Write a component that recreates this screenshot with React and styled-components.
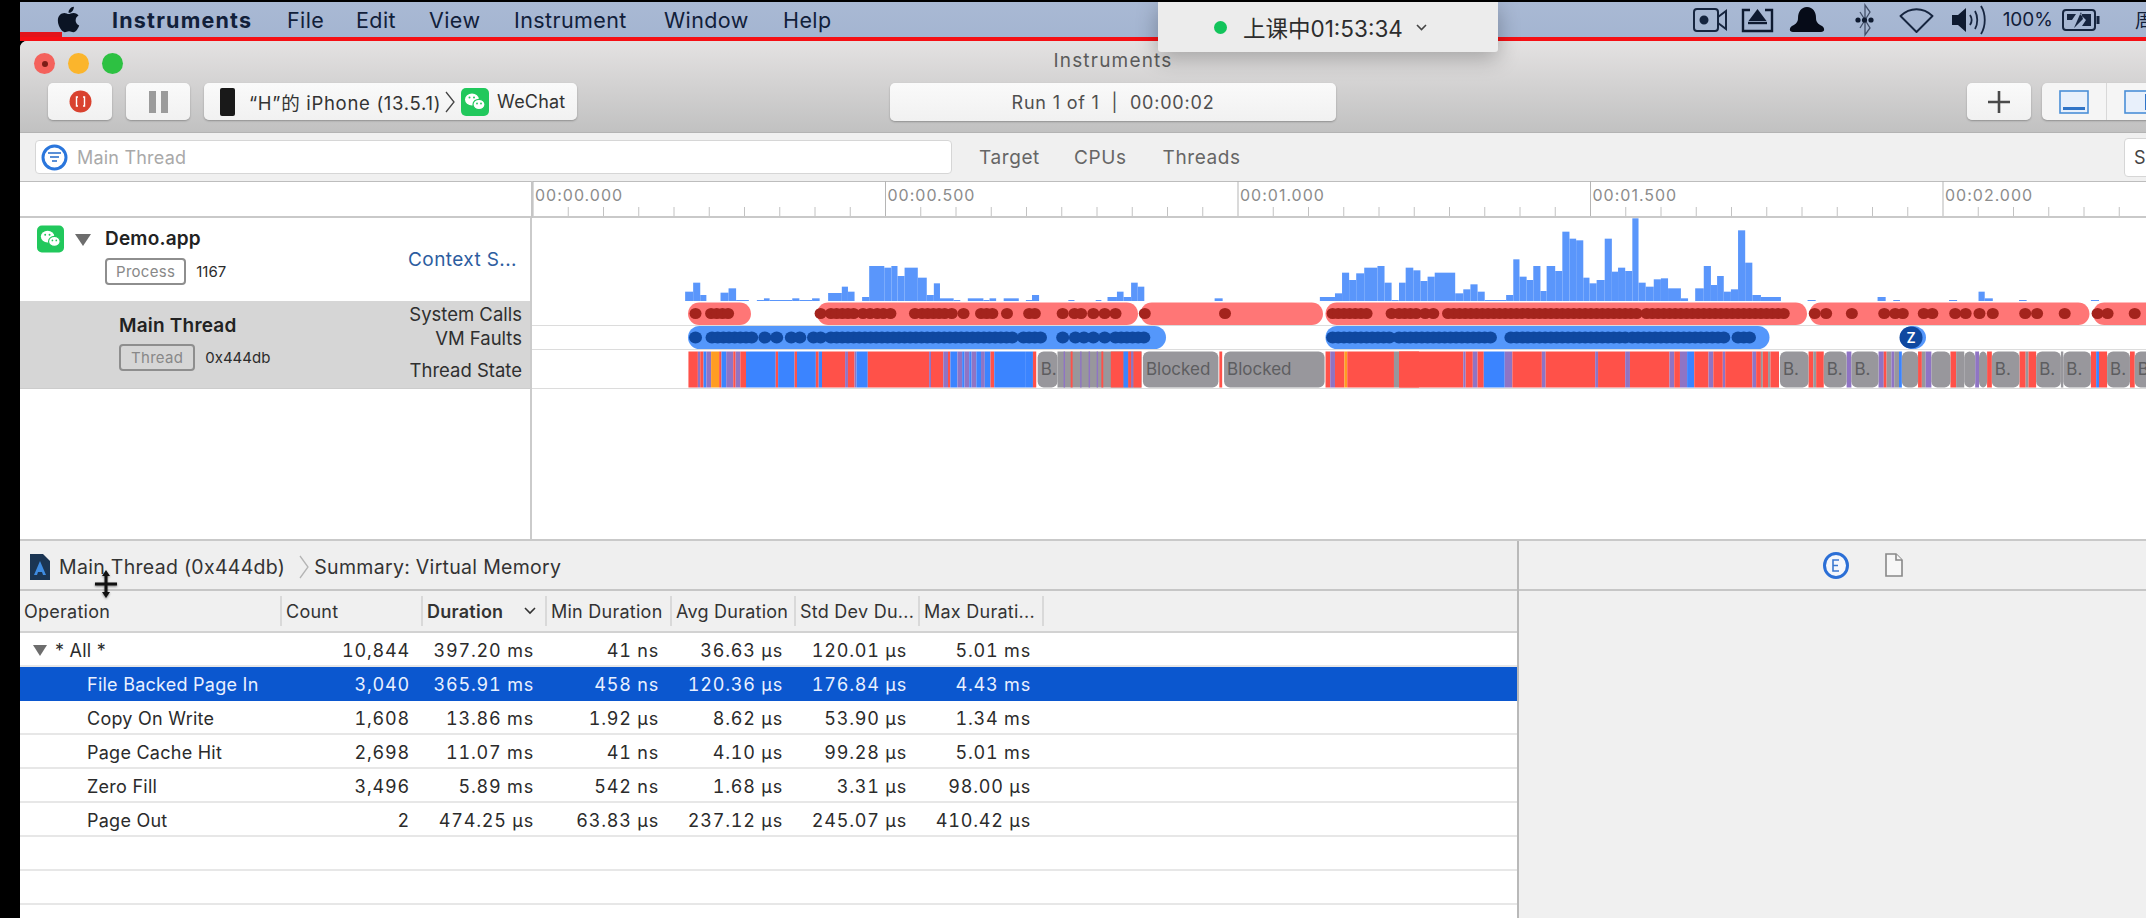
import React from "react";
import styled, { createGlobalStyle } from "styled-components";
import { FaApple } from "react-icons/fa";

const FONT = `Inter, "Noto Sans CJK SC", "Liberation Sans", sans-serif`;

const Global = createGlobalStyle`
  html, body { margin: 0; padding: 0; background: #000; overflow: hidden; }
  body { font-family: ${FONT}; }
`;

const Page = styled.div`
  position: relative;
  width: 2146px;
  height: 918px;
  overflow: hidden;
  background: #000;
  padding: 2px 0 0 20px;
  box-sizing: border-box;
`;
const Column = styled.div`
  display: flex;
  flex-direction: column;
  width: 2186px;
`;
const MenuBar = styled.div`
  position: relative;
  height: 35px;
  display: flex;
  align-items: center;
  padding: 0 52px 0 35px;
  background: linear-gradient(#a9b9d4, #a4b5d1);
  color: #11203a;
  font-size: 21.5px;
  letter-spacing: 0.4px;
  flex: none;
`;
const RedLine = styled.div`
  height: 4px;
  background: #f50f14;
  flex: none;
`;
const Progress = styled.div`
  position: absolute;
  left: 0;
  bottom: 0;
  width: 42px;
  height: 5px;
  background: #e2141a;
`;
const AppleMark = styled(FaApple)`
  position: relative;
  width: 27px;
  height: 29px;
  color: #0b1424;
  margin-right: 30px;
`;
const AppName = styled.span`
  font-weight: 700;
  width: 175px;
  letter-spacing: 1.2px;
`;
const MenuItem = styled.span`
  width: ${(p) => p.$w}px;
`;
const Status = styled.div`
  margin-left: auto;
  display: flex;
  align-items: center;
  font-size: 19px;
  letter-spacing: 0;
`;
const StatusCell = styled.span`
  display: flex;
  margin-left: ${(p) => p.$gap}px;
  white-space: nowrap;
`;

const Notice = styled.div`
  position: absolute;
  left: 1158px;
  top: 2px;
  width: 340px;
  height: 50px;
  background: #ececec;
  display: flex;
  align-items: center;
  padding-left: 56px;
  box-sizing: border-box;
  box-shadow: 0 6px 22px rgba(0, 0, 0, 0.28);
  border-radius: 0 0 3px 3px;
  color: #2d2d2d;
  font-size: 22.5px;
`;
const GreenDot = styled.i`
  width: 13px;
  height: 13px;
  border-radius: 50%;
  background: #12c45b;
  margin-right: 16px;
`;
const NoticeChevron = styled.svg`
  margin-left: 13px;
`;

const Win = styled.div`
  width: 2186px;
  height: 877px;
  background: #fff;
  border-radius: 7px 0 0 0;
  overflow: hidden;
  display: flex;
  flex-direction: column;
`;
const TitleBar = styled.div`
  height: 92px;
  flex: none;
  box-sizing: border-box;
  background: linear-gradient(#e4e2e2, #c1c1c1);
  border-bottom: 1px solid #b3b3b3;
  display: flex;
  flex-direction: column;
`;
const TopStrip = styled.div`
  height: 42px;
  display: grid;
  grid-template-columns: 1fr auto 1fr;
  align-items: center;
  box-sizing: border-box;
`;
const Lights = styled.div`
  display: flex;
  gap: 13px;
  padding: 3px 0 0 14px;
`;
const Light = styled.span`
  width: 21px;
  height: 21px;
  border-radius: 50%;
  background: ${(p) => p.$c};
  display: flex;
  align-items: center;
  justify-content: center;
`;
const LightDot = styled.i`
  width: 6px;
  height: 6px;
  border-radius: 50%;
  background: #7c1d16;
`;
const WinTitle = styled.div`
  font-size: 19px;
  color: #5b5b5b;
  letter-spacing: 1.2px;
  padding-bottom: 3px;
`;
const Controls = styled.div`
  display: grid;
  grid-template-columns: 1fr 446px 1fr;
  height: 38px;
`;
const ControlsLeft = styled.div`
  display: flex;
  gap: 14px;
  padding-left: 28px;
`;
const ControlsRight = styled.div`
  display: flex;
  justify-content: flex-end;
  gap: 11px;
  padding-right: 36px;
`;
const Btn = styled.div`
  width: ${(p) => p.$w || 64}px;
  height: 37px;
  background: linear-gradient(#fafafa, #f1f1f1);
  border-radius: 5px;
  box-shadow: 0 1px 2px rgba(0, 0, 0, 0.28);
  display: flex;
  align-items: center;
  justify-content: center;
  flex: none;
  color: #3a3a3a;
  font-size: 17px;
`;
const DeviceBtn = styled(Btn)`
  justify-content: flex-start;
  padding-left: 16px;
  box-sizing: border-box;
  color: #333;
`;
const DeviceName = styled.span`
  margin-left: 14px;
  white-space: nowrap;
  font-size: 18.5px;
  letter-spacing: 0.7px;
`;
const DeviceChevron = styled.svg`
  margin: 0 5px 0 3px;
  flex: none;
`;
const WeChatName = styled.span`
  margin-left: 8px;
  font-size: 18px;
  letter-spacing: 0.2px;
`;
const RunBtn = styled(Btn)`
  width: 446px;
  height: 38px;
  color: #4f4f4f;
  font-size: 18px;
  letter-spacing: 0.8px;
`;
const PanelGroup = styled.div`
  display: flex;
  height: 37px;
  background: #f5f5f5;
  border-radius: 5px;
  box-shadow: 0 1px 2px rgba(0, 0, 0, 0.28);
`;
const PanelCell = styled.div`
  width: 64px;
  display: flex;
  align-items: center;
  justify-content: center;
  border-left: ${(p) => (p.$first ? "none" : "1px solid #d8d8d8")};
  box-sizing: border-box;
`;

const FilterBar = styled.div`
  height: 48px;
  flex: none;
  box-sizing: border-box;
  background: #f0f0f0;
  display: flex;
  align-items: center;
  padding: 0 36px 0 15px;
`;
const FilterInput = styled.div`
  width: 917px;
  height: 34px;
  box-sizing: border-box;
  background: #fff;
  border: 1px solid #d6d6d6;
  border-radius: 4px;
  display: flex;
  align-items: center;
  padding-left: 5px;
  color: #a9a9a9;
  font-size: 18px;
`;
const FilterText = styled.span`
  margin-left: 9px;
  letter-spacing: 0.2px;
`;
const FilterTab = styled.span`
  margin-left: ${(p) => p.$gap}px;
  color: #666;
  font-size: 19px;
  letter-spacing: 0.6px;
`;
const StrategyBtn = styled.div`
  margin-left: auto;
  width: 46px;
  height: 39px;
  background: #fff;
  border: 1px solid #d6d6d6;
  border-radius: 4px;
  box-sizing: border-box;
  padding-left: 9px;
  display: flex;
  align-items: center;
  color: #444;
  font-size: 18px;
`;

const RulerSvg = styled.svg`
  display: block;
  width: 2186px;
  height: 37px;
  flex: none;
`;
const RulerLabel = styled.text`
  font-family: ${FONT};
  font-size: 16px;
  fill: #8c8c8c;
  letter-spacing: 1px;
`;

const TrackRow = styled.div`
  display: grid;
  grid-template-columns: 512px 1fr;
  height: ${(p) => p.$h}px;
  flex: none;
`;
const TrackHead = styled.div`
  position: relative;
  display: grid;
  background: ${(p) => (p.$dark ? "#d6d6d6" : "#fff")};
  border-right: 2px solid #cbcbcb;
  border-bottom: ${(p) => (p.$dark ? "1px solid #ccc" : "none")};
  box-sizing: border-box;
`;
const ProcessHead = styled(TrackHead)`
  grid-template-columns: 38px 30px 1fr auto;
  padding: 7px 10px 0 17px;
`;
const ThreadHead = styled(TrackHead)`
  grid-template-columns: 1fr auto;
  padding: 0 8px 0 99px;
  align-items: center;
`;
const TriCell = styled.div`
  padding-top: 9px;
`;
const Tri = styled.span`
  display: block;
  width: 0;
  height: 0;
  border-left: ${(p) => p.$s}px solid transparent;
  border-right: ${(p) => p.$s}px solid transparent;
  border-top: ${(p) => p.$s * 1.5}px solid #6d6d6d;
`;
const NameBlock = styled.div`
  display: flex;
  flex-direction: column;
  gap: ${(p) => p.$gap}px;
  padding-top: ${(p) => p.$top || 0}px;
  padding-bottom: ${(p) => p.$bottom || 0}px;
`;
const TrackName = styled.div`
  font-size: 19px;
  font-weight: 600;
  color: #222;
  line-height: 22px;
  letter-spacing: 0.2px;
`;
const IdLine = styled.div`
  display: flex;
  align-items: center;
  gap: 10px;
  font-size: 15px;
  color: #2c2c2c;
`;
const Badge = styled.span`
  border: 2px solid #8e8e8e;
  border-radius: 4px;
  padding: 0 ${(p) => p.$pad}px;
  height: 23px;
  line-height: 23px;
  font-size: 15px;
  color: #888;
  letter-spacing: 0.3px;
`;
const ContextLink = styled.div`
  color: #2d5d9f;
  font-size: 19px;
  letter-spacing: 0.4px;
  padding: 23px 3px 0 0;
`;
const Labels = styled.div`
  display: flex;
  flex-direction: column;
  align-items: flex-end;
  font-size: 18.5px;
  color: #2f2f2f;
  line-height: 24px;
  padding-bottom: 5px;
`;
const LabelGap = styled.span`
  margin-top: ${(p) => p.$m}px;
`;
const GraphSvg = styled.svg`
  display: block;
  width: 1654px;
  height: ${(p) => p.$h}px;
`;
const SegLabel = styled.text`
  font-family: ${FONT};
  font-size: 17px;
  fill: #5d5d60;
`;
const ZLabel = styled.text`
  font-family: ${FONT};
  font-size: 14px;
  font-weight: 600;
  fill: #fff;
`;
const Blank = styled.div`
  height: 150px;
  flex: none;
  display: grid;
  grid-template-columns: 512px 1fr;
`;
const BlankLeft = styled.div`
  border-right: 2px solid #cbcbcb;
`;

const Lower = styled.div`
  flex: 1;
  display: grid;
  grid-template-columns: 1499px 1fr;
  border-top: 2px solid #c9c9c9;
  min-height: 0;
`;
const TablePane = styled.div`
  display: flex;
  flex-direction: column;
  background: #fff;
  border-right: 2px solid #b9b9b9;
  box-sizing: border-box;
  position: relative;
`;
const Crumbs = styled.div`
  height: 50px;
  flex: none;
  box-sizing: border-box;
  background: #efefef;
  border-bottom: 2px solid #c6c6c6;
  display: flex;
  align-items: center;
  padding: 3px 0 0 10px;
  color: #333;
  font-size: 19.5px;
  letter-spacing: 0.3px;
`;
const CrumbText = styled.span`
  margin-left: ${(p) => p.$m}px;
`;
const CrumbChevron = styled.svg`
  margin-left: 13px;
`;
const Grid = styled.div`
  display: grid;
  grid-template-columns: 262px 141px 124px 125px 124px 124px 124px 1fr;
  box-sizing: border-box;
`;
const Head = styled(Grid)`
  height: 42px;
  flex: none;
  background: #f0f0f0;
  border-bottom: 2px solid #d2d2d2;
  align-items: center;
`;
const HeadCell = styled.div`
  height: 30px;
  display: flex;
  align-items: center;
  justify-content: space-between;
  box-sizing: border-box;
  padding: 0 4px;
  border-right: ${(p) => (p.$last ? "none" : "2px solid #d9d9d9")};
  font-size: 18px;
  letter-spacing: 0.25px;
  font-weight: ${(p) => (p.$bold ? 600 : 400)};
  color: #333;
  white-space: nowrap;
  overflow: hidden;
`;
const SortChevron = styled.svg`
  margin-right: 5px;
`;
const Row = styled(Grid)`
  height: 34px;
  flex: none;
  align-items: center;
  padding-top: 2px;
  background: ${(p) => (p.$sel ? "#0b57cf" : "#fff")};
  color: ${(p) => (p.$sel ? "#e9f0ff" : "#2b2b2b")};
  border-bottom: 2px solid ${(p) => (p.$sel ? "#0b57cf" : "#e7e7e7")};
  font-size: 18px;
`;
const NameCell = styled.div`
  display: flex;
  align-items: center;
  padding-left: ${(p) => (p.$tree ? 13 : 67)}px;
  gap: 8px;
  letter-spacing: 0.25px;
`;
const Num = styled.div`
  text-align: right;
  padding-right: 13px;
  font-variant-numeric: tabular-nums;
  letter-spacing: 0.8px;
`;
const RightPane = styled.div`
  background: #f0f0f0;
  display: flex;
  flex-direction: column;
`;
const InspectorBar = styled.div`
  height: 50px;
  box-sizing: border-box;
  border-bottom: 2px solid #c6c6c6;
  display: flex;
  align-items: center;
  gap: 36px;
  padding-left: 304px;
  flex: none;
`;
const Cursor = styled.svg`
  position: absolute;
  left: 74px;
  top: 29px;
  filter: drop-shadow(0 1px 1px rgba(0, 0, 0, 0.45));
`;

const WeChat = ({ w = 28, h = 28 }) => (
  <svg width={w} height={h} viewBox="0 0 28 28">
    <rect width="28" height="28" rx="5" fill="#21c85c" />
    <ellipse cx="11" cy="11.5" rx="7" ry="6" fill="#fff" />
    <ellipse cx="18" cy="16.5" rx="6" ry="5.2" fill="#fff" stroke="#21c85c" strokeWidth="1.2" />
    <circle cx="8.5" cy="9.500" r="1" fill="#21c85c" />
    <circle cx="13" cy="9.500" r="1" fill="#21c85c" />
    <circle cx="16" cy="15.500" r=".9" fill="#21c85c" />
    <circle cx="20" cy="15.500" r=".9" fill="#21c85c" />
  </svg>
);

const z5 = (x) => 680 + x / 2.119;
const z6 = (x) => 1400 + x / 2.1;
const yz = (y) => 200 + y / 3;

const H5 = [[13,30,272],[30,45,245],[45,58,282],[88,105,275],[105,121,262],[121,148,297],[165,180,297],[180,192,292],[192,240,297],[240,255,292],[255,282,297],[282,298,292],[316,345,276],[345,358,257],[358,372,272],[388,403,288],[403,435,195],[435,450,200],[450,463,195],[463,478,225],[478,506,200],[506,525,230],[525,540,282],[540,553,247],[553,582,292],[582,596,297],[612,645,292],[645,658,297],[658,672,292],[688,720,292],[735,748,297],[748,763,282],[825,838,297],[883,895,297],[908,928,288],[928,942,272],[942,958,288],[958,972,245],[972,986,257],[1135,1152,292],[1358,1390,288],[1390,1405,277],[1405,1420,215],[1420,1435,237],[1435,1452,217],[1452,1480,200],[1480,1495,195],[1495,1510,245],[1510,1525,297]];
const H6 = [[0,14,245],[14,30,200],[30,45,208],[45,60,240],[60,75,227],[75,118,215],[118,135,277],[135,150,265],[150,165,250],[165,180,272],[180,225,297],[225,240,282],[240,253,175],[253,268,227],[268,282,237],[282,297,195],[297,310,270],[310,328,195],[328,343,210],[343,358,92],[358,372,113],[372,387,118],[387,400,230],[400,415,247],[415,432,237],[432,447,113],[447,460,212],[460,475,200],[475,490,210],[490,503,52],[503,518,245],[518,535,257],[535,550,235],[550,565,232],[565,592,262],[592,607,292],[607,622,300],[622,640,262],[640,655,195],[655,668,252],[668,682,225],[682,697,272],[697,712,265],[712,727,88],[727,742,185],[742,760,282],[760,802,288],[858,875,297],[1005,1022,288],[1038,1052,297],[1155,1172,297],[1217,1230,272],[1230,1247,292],[1302,1318,297],[1453,1470,297]];
const bars = [...H5.map(([a, b, t]) => [z5(a), z5(b), t]), ...H6.map(([a, b, t]) => [z6(a), z6(b), t])];

const runs = (list, fn, step = 12) =>
  list.flatMap((d) => {
    if (typeof d === "number") return [fn(d)];
    const out = [];
    for (let x = d[0]; x <= d[1]; x += step) out.push(fn(x));
    return out;
  });

const red5 = [35,[68,107],300,[322,378],390,405,420,433,448,500,[515,565],578,603,[640,675],695,[742,763],813,838,852,878,902,925,987,1157,[1385,1465],[1510,1520]];
const red6 = [[0,40],55,72,103,[115,510],[520,810],873,897,951,1019,1042,1058,1102,1120,1168,1190,1219,1247,1315,1340,1398,1467,1488,1545];
const blue5 = [35,[70,165],182,207,238,256,285,300,[322,710],[730,770],813,840,858,878,902,[925,985],[1385,1515]];
const blue6 = [[0,195],[235,480],[490,690],[712,738]];

const C = { r: "#ff5149", b: "#3b84ff", p: "#8f74c4", o: "#ff9d22", g: "#98979c" };
const seg5 = [[20,40,"r"],[40,45,"p"],[45,52,"r"],[52,58,"b"],[58,68,"p"],[68,85,"o"],[85,90,"r"],[90,100,"b"],[100,115,"p"],[115,120,"r"],[120,130,"p"],[130,142,"r"],[142,205,"b"],[205,210,"r"],[210,245,"b"],[245,250,"r"],[250,290,"b"],[290,296,"r"],[296,303,"b"],[303,352,"r"],[352,358,"p"],[358,372,"r"],[372,376,"p"],[376,400,"b"],[400,530,"r"],[530,534,"p"],[534,560,"r"],[560,570,"p"],[570,575,"r"],[575,590,"b"],[590,600,"p"],[600,605,"b"],[605,615,"p"],[615,620,"b"],[620,630,"p"],[630,640,"b"],[640,648,"p"],[648,660,"b"],[660,668,"r"],[668,735,"b"],[735,750,"b"],[750,757,"r"],[802,980,"g"],[815,818,"p"],[830,834,"r"],[850,853,"p"],[868,871,"p"],[885,888,"p"],[895,899,"r"],[915,942,"r"],[942,952,"b"],[952,958,"r"],[958,963,"p"],[963,980,"r"],[1145,1151,"r"],[1370,1380,"r"],[1380,1390,"p"],[1390,1410,"r"],[1410,1416,"o"],[1416,1515,"r"],[1515,1526,"g"],[1526,1568,"r"]];
const seg6 = [[0,135,"r"],[135,140,"p"],[140,155,"r"],[155,165,"p"],[165,178,"r"],[178,222,"b"],[222,238,"p"],[238,300,"r"],[300,308,"p"],[308,412,"r"],[412,418,"p"],[418,475,"r"],[475,485,"p"],[485,568,"r"],[568,578,"p"],[578,590,"r"],[590,605,"p"],[605,620,"b"],[620,650,"r"],[650,660,"p"],[660,680,"r"],[680,685,"p"],[685,742,"r"],[742,750,"p"],[750,760,"r"],[760,764,"g"],[764,775,"r"],[775,780,"g"],[780,798,"r"],[860,870,"r"],[870,876,"g"],[876,892,"r"],[940,950,"p"],[1007,1018,"p"],[1018,1024,"r"],[1024,1034,"g"],[1034,1040,"p"],[1040,1050,"g"],[1050,1056,"b"],[1090,1098,"r"],[1098,1106,"g"],[1106,1118,"p"],[1158,1170,"r"],[1170,1187,"g"],[1210,1218,"p"],[1235,1245,"r"],[1303,1316,"r"],[1316,1322,"g"],[1322,1338,"r"],[1390,1395,"g"],[1453,1464,"r"],[1464,1470,"b"],[1470,1487,"r"],[1535,1545,"r"]];
const blocks5 = [[760,802,"B."],[983,1143,"Blocked"],[1155,1368,"Blocked"]];
const blocks6 = [[800,860,"B."],[892,940,"B."],[950,1007,"B."],[1056,1090,""],[1118,1158,""],[1187,1210,""],[1218,1235,""],[1245,1303,"B."],[1338,1390,"B."],[1395,1453,"B."],[1487,1535,"B."],[1545,1590,"B."]];

const Histogram = () => (
  <GraphSvg $h={84} viewBox="533 217 1654 84">
    {bars.map(([a, b, t], i) => (
      <rect key={i} x={a} y={yz(t)} width={b - a} height={301 - yz(t)} fill="#5a96fb" />
    ))}
    <line x1="533" x2="2187" y1="300.5" y2="300.5" stroke="#d5d5d5" />
  </GraphSvg>
);

const Capsule = ({ a, b, y, h, c }) => <rect x={a} y={y} width={b - a} height={h} rx={h / 2} fill={c} />;

const ThreadGraph = () => (
  <GraphSvg $h={88} viewBox="533 301 1654 88">
    <rect x="533" y="301" width="1654" height="88" fill="#fff" />
    {[325.5, 349.5, 388.5].map((y) => (
      <line key={y} x1="533" x2="2187" y1={y} y2={y} stroke="#dcdcdc" />
    ))}
    {[[689,752],[818,1139],[1141.5,1324],[1326.5,1808],[1810.5,2090.5],[2094,2180]].map(([a, b]) => (
      <Capsule key={a} a={a} b={b} y={302.5} h={22.5} c="#ff7676" />
    ))}
    {[...runs(red5, z5), ...runs(red6, z6)].map((x, i) => (
      <ellipse key={i} cx={x} cy={313.5} rx={6} ry={5.5} fill="#a4241d" />
    ))}
    {[[689,1167],[1326.5,1770.5]].map(([a, b]) => (
      <Capsule key={a} a={a} b={b} y={326} h={23} c="#5497fb" />
    ))}
    {[...runs(blue5, z5), ...runs(blue6, z6)].map((x, i) => (
      <ellipse key={i} cx={x} cy={337.5} rx={6.5} ry={6} fill="#0f48a0" />
    ))}
    <ellipse cx={1914} cy={337.5} rx={13} ry={11.5} fill="#5497fb" />
    <ellipse cx={1912} cy={337.5} rx={11.5} ry={11} fill="#0f48a0" />
    <ZLabel x={1912} y={342.5} textAnchor="middle">Z</ZLabel>
    {[...seg5.map(([a, b, c]) => [z5(a), z5(b), c]), ...seg6.map(([a, b, c]) => [z6(a), z6(b), c])].map(([a, b, c], i) => (
      <rect key={i} x={a} y={351.5} width={b - a} height={36} fill={C[c]} />
    ))}
    {[...blocks5.map(([a, b, t]) => [z5(a), z5(b), t]), ...blocks6.map(([a, b, t]) => [z6(a), z6(b), t])].map(([a, b, t], i) => (
      <g key={i}>
        <rect x={a} y={351.5} width={b - a} height={36} rx={6} fill={C.g} />
        {t && <SegLabel x={a + 3} y={375}>{t}</SegLabel>}
      </g>
    ))}
  </GraphSvg>
);

const Ruler = () => {
  const ticks = [];
  for (let i = 0; i < 47; i++) {
    const x = 533 + i * 35.25;
    const major = i % 10 === 0;
    ticks.push(<line key={i} x1={x} x2={x} y1={major ? 181 : 207} y2={217} stroke={major ? "#b5b5b5" : "#c2c2c2"} />);
  }
  return (
    <RulerSvg viewBox="20 181 2186 37">
      <rect x="20" y="181" width="2186" height="37" fill="#fff" />
      <line x1="20" x2="2206" y1="181.500" y2="181.500" stroke="#bdbdbd" />
      {ticks}
      {["00:00.000", "00:00.500", "00:01.000", "00:01.500", "00:02.000"].map((t, i) => (
        <RulerLabel key={t} x={535 + i * 352.5} y={201}>{t}</RulerLabel>
      ))}
      <line x1="20" x2="2206" y1="217" y2="217" stroke="#c9c9c9" strokeWidth="2" />
      <line x1="532" x2="532" y1="181" y2="218" stroke="#c5c5c5" strokeWidth="2" />
    </RulerSvg>
  );
};

const rows = [
  ["File Backed Page In", "3,040", "365.91 ms", "458 ns", "120.36 µs", "176.84 µs", "4.43 ms"],
  ["Copy On Write", "1,608", "13.86 ms", "1.92 µs", "8.62 µs", "53.90 µs", "1.34 ms"],
  ["Page Cache Hit", "2,698", "11.07 ms", "41 ns", "4.10 µs", "99.28 µs", "5.01 ms"],
  ["Zero Fill", "3,496", "5.89 ms", "542 ns", "1.68 µs", "3.31 µs", "98.00 µs"],
  ["Page Out", "2", "474.25 µs", "63.83 µs", "237.12 µs", "245.07 µs", "410.42 µs"],
];

export default function App() {
  return (
    <Page>
      <Global />
      <Column>
        <MenuBar>
          <Progress />
          <AppleMark />
          <AppName>Instruments</AppName>
          <MenuItem $w={69}>File</MenuItem>
          <MenuItem $w={73}>Edit</MenuItem>
          <MenuItem $w={85}>View</MenuItem>
          <MenuItem $w={150}>Instrument</MenuItem>
          <MenuItem $w={119}>Window</MenuItem>
          <MenuItem $w={60}>Help</MenuItem>
          <Status>
            <StatusCell $gap={0}>
              <svg width="35" height="26" viewBox="0 0 35 26" fill="none" stroke="#16253f" strokeWidth="2">
                <rect x="1" y="2" width="24" height="22" rx="3" />
                <circle cx="11" cy="13" r="3.5" fill="#16253f" />
                <path d="M25 10l8-6v18l-8-6" />
              </svg>
            </StatusCell>
            <StatusCell $gap={13}>
              <svg width="33" height="26" viewBox="0 0 33 26" fill="none" stroke="#0e1a30" strokeWidth="2.4">
                <path d="M9 3H2v21h29V3h-7" />
                <path d="M16.500 2l9 12h-18z" fill="#0e1a30" stroke="none" />
                <path d="M7 16h19" />
              </svg>
            </StatusCell>
            <StatusCell $gap={15}>
              <svg width="36" height="27" viewBox="0 0 36 27">
                <path d="M18 1c6 0 9 5 9 11 0 4 2 6 6 8 3 2 3 6-1 6H4c-4 0-4-4-1-6 4-2 6-4 6-8C9 6 12 1 18 1z" fill="#060b18" />
              </svg>
            </StatusCell>
            <StatusCell $gap={30}>
              <svg width="19" height="34" viewBox="0 0 19 34" fill="none" stroke="#43506a" strokeWidth="1.3">
                <path d="M5 9l10 16-5 7V2l5 7L5 25" />
                <circle cx="3" cy="17" r="2.6" fill="#0e1a30" stroke="none" />
                <circle cx="9.500" cy="17" r="2.6" fill="#0e1a30" stroke="none" />
                <circle cx="16" cy="17" r="2.6" fill="#0e1a30" stroke="none" />
              </svg>
            </StatusCell>
            <StatusCell $gap={25}>
              <svg width="35" height="26" viewBox="0 0 35 26" fill="none" stroke="#16253f" strokeWidth="1.9">
                <path d="M1.500 9C11 0 24 0 33.500 9L17.500 25z" strokeLinejoin="round" />
              </svg>
            </StatusCell>
            <StatusCell $gap={17}>
              <svg width="35" height="32" viewBox="0 0 35 32" fill="none" stroke="#16253f" strokeWidth="1.8">
                <path d="M1 11h6l8-7v24l-8-7H1z" fill="#0e1a30" stroke="none" />
                <path d="M19 11c2 3 2 7 0 10M24 7c3 5 3 13 0 18M30 2c5 8 5 20 0 28" />
              </svg>
            </StatusCell>
            <StatusCell $gap={17}>100%</StatusCell>
            <StatusCell $gap={9}>
              <svg width="39" height="24" viewBox="0 0 39 24" fill="none" stroke="#16253f" strokeWidth="2">
                <rect x="1" y="2" width="32" height="20" rx="3" />
                <path d="M36 8v8" strokeWidth="3" />
                <path d="M5 6h9l-4 6H5zM18 6h11v12h-9l4-6zM19 4l-7 16 9-9z" fill="#16253f" stroke="none" />
              </svg>
            </StatusCell>
            <StatusCell $gap={34}>周</StatusCell>
          </Status>
        </MenuBar>
        <RedLine />
        <Win>
          <TitleBar>
            <TopStrip>
              <Lights>
                <Light $c="#f4625c"><LightDot /></Light>
                <Light $c="#fbb52c" />
                <Light $c="#2dc142" />
              </Lights>
              <WinTitle>Instruments</WinTitle>
              <span />
            </TopStrip>
            <Controls>
              <ControlsLeft>
                <Btn>
                  <svg width="23" height="23" viewBox="0 0 23 23" fill="none">
                    <circle cx="11.500" cy="11.500" r="11" fill="#d9422f" />
                    <path d="M9 7H7.500v9H9M14 7h1.500v9H14" stroke="#fff" strokeWidth="1.4" />
                  </svg>
                </Btn>
                <Btn>
                  <svg width="19" height="22" viewBox="0 0 19 22" fill="#9b9b9b">
                    <rect x="0" width="7" height="22" />
                    <rect x="12" width="7" height="22" />
                  </svg>
                </Btn>
                <DeviceBtn $w={373}>
                  <svg width="15" height="28" viewBox="0 0 15 28">
                    <rect width="15" height="28" rx="2" fill="#191919" />
                  </svg>
                  <DeviceName>“H”的 iPhone (13.5.1)</DeviceName>
                  <DeviceChevron width="12" height="24" viewBox="0 0 12 24" fill="none" stroke="#444" strokeWidth="1.3">
                    <path d="M2 2l8 10-8 10" />
                  </DeviceChevron>
                  <WeChat w={28} h={28} />
                  <WeChatName>WeChat</WeChatName>
                </DeviceBtn>
              </ControlsLeft>
              <RunBtn>Run 1 of 1&nbsp;&nbsp;|&nbsp;&nbsp;00:00:02</RunBtn>
              <ControlsRight>
                <Btn>
                  <svg width="22" height="22" viewBox="0 0 22 22" stroke="#4a4a4a" strokeWidth="2.6">
                    <path d="M11 0v22M0 11h22" />
                  </svg>
                </Btn>
                <PanelGroup>
                  <PanelCell $first>
                    <svg width="30" height="24" viewBox="0 0 30 24">
                      <rect x="1" y="1" width="28" height="22" fill="#e8f0fb" stroke="#4a8fd8" strokeWidth="1.6" />
                      <rect x="4" y="17" width="22" height="3" fill="#2f74c8" />
                    </svg>
                  </PanelCell>
                  <PanelCell>
                    <svg width="30" height="24" viewBox="0 0 30 24">
                      <rect x="1" y="1" width="28" height="22" fill="#e8f0fb" stroke="#4a8fd8" strokeWidth="1.6" />
                      <rect x="21" y="4" width="5" height="16" fill="#2f74c8" />
                    </svg>
                  </PanelCell>
                </PanelGroup>
              </ControlsRight>
            </Controls>
          </TitleBar>
          <FilterBar>
            <FilterInput>
              <svg width="27" height="27" viewBox="0 0 27 27" fill="none">
                <circle cx="13.500" cy="13.500" r="11.500" stroke="#2a76dc" strokeWidth="3" fill="#fff" />
                <path d="M7 9h13M9 13h9M11 17h5" stroke="#5a8fd6" strokeWidth="2" />
              </svg>
              <FilterText>Main Thread</FilterText>
            </FilterInput>
            <FilterTab $gap={27}>Target</FilterTab>
            <FilterTab $gap={34}>CPUs</FilterTab>
            <FilterTab $gap={36}>Threads</FilterTab>
            <StrategyBtn>S</StrategyBtn>
          </FilterBar>
          <Ruler />
          <TrackRow $h={83}>
            <ProcessHead>
              <WeChat w={27} h={28} />
              <TriCell><Tri $s={8} /></TriCell>
              <NameBlock $gap={8} $top={3}>
                <TrackName>Demo.app</TrackName>
                <IdLine>
                  <Badge $pad={9}>Process</Badge>
                  1167
                </IdLine>
              </NameBlock>
              <ContextLink>Context S...</ContextLink>
            </ProcessHead>
            <Histogram />
          </TrackRow>
          <TrackRow $h={88}>
            <ThreadHead $dark>
              <NameBlock $gap={7} $bottom={3}>
                <TrackName>Main Thread</TrackName>
                <IdLine>
                  <Badge $pad={10}>Thread</Badge>
                  0x444db
                </IdLine>
              </NameBlock>
              <Labels>
                <span>System Calls</span>
                <span>VM Faults</span>
                <LabelGap $m={8}>Thread State</LabelGap>
              </Labels>
            </ThreadHead>
            <ThreadGraph />
          </TrackRow>
          <Blank>
            <BlankLeft />
            <span />
          </Blank>
          <Lower>
            <TablePane>
              <Crumbs>
                <svg width="20" height="26" viewBox="0 0 20 26">
                  <path d="M0 0h13l7 7v19H0z" fill="#1b3553" />
                  <path d="M10 7l6 14h-3l-1-3H8l-1 3H4z" fill="#3f8be0" />
                </svg>
                <CrumbText $m={9}>Main Thread (0x444db)</CrumbText>
                <CrumbChevron width="12" height="26" viewBox="0 0 12 26" fill="none" stroke="#b4b4b4" strokeWidth="1.3">
                  <path d="M2 2l8 11-8 11" />
                </CrumbChevron>
                <CrumbText $m={4}>Summary: Virtual Memory</CrumbText>
              </Crumbs>
              <Head>
                <HeadCell>Operation</HeadCell>
                <HeadCell>Count</HeadCell>
                <HeadCell $bold>
                  Duration
                  <SortChevron width="12" height="8" viewBox="0 0 12 8" fill="none" stroke="#333" strokeWidth="1.6">
                    <path d="M1 1l5 5 5-5" />
                  </SortChevron>
                </HeadCell>
                <HeadCell>Min Duration</HeadCell>
                <HeadCell>Avg Duration</HeadCell>
                <HeadCell>Std Dev Du...</HeadCell>
                <HeadCell>Max Durati...</HeadCell>
                <HeadCell $last />
              </Head>
              <Row>
                <NameCell $tree><Tri $s={7.5} />* All *</NameCell>
                <Num>10,844</Num>
                <Num>397.20 ms</Num>
                <Num>41 ns</Num>
                <Num>36.63 µs</Num>
                <Num>120.01 µs</Num>
                <Num>5.01 ms</Num>
              </Row>
              {rows.map((r, i) => (
                <Row key={r[0]} $sel={i === 0}>
                  <NameCell>{r[0]}</NameCell>
                  {r.slice(1).map((v, j) => (
                    <Num key={j}>{v}</Num>
                  ))}
                </Row>
              ))}
              <Row />
              <Row />
              <Cursor width="24" height="28" viewBox="0 0 24 28">
                <path d="M12 0l4 6h-2.500v6.500H23v3H13.500V22H16l-4 6-4-6h2.500v-6.500H1v-3h9.500V6H8z" fill="#111" />
              </Cursor>
            </TablePane>
            <RightPane>
              <InspectorBar>
                <svg width="26" height="27" viewBox="0 0 26 27" fill="none">
                  <ellipse cx="13" cy="13.500" rx="11.500" ry="12" stroke="#2b6fd6" strokeWidth="3" fill="#f4f7fc" />
                  <path d="M16 8h-6v11h6M10 13.500h5" stroke="#3b78cf" strokeWidth="1.6" />
                </svg>
                <svg width="18" height="24" viewBox="0 0 18 24" fill="#f7f7f7" stroke="#888" strokeWidth="1.6">
                  <path d="M1 1h10l6 6v16H1z" />
                  <path d="M11 1v6h6" />
                </svg>
              </InspectorBar>
            </RightPane>
          </Lower>
        </Win>
      </Column>
      <Notice>
        <GreenDot />
        上课中01:53:34
        <NoticeChevron width="11" height="7" viewBox="0 0 11 7" fill="none" stroke="#444" strokeWidth="1.6">
          <path d="M1 1l4.500 4.500L10 1" />
        </NoticeChevron>
      </Notice>
    </Page>
  );
}
